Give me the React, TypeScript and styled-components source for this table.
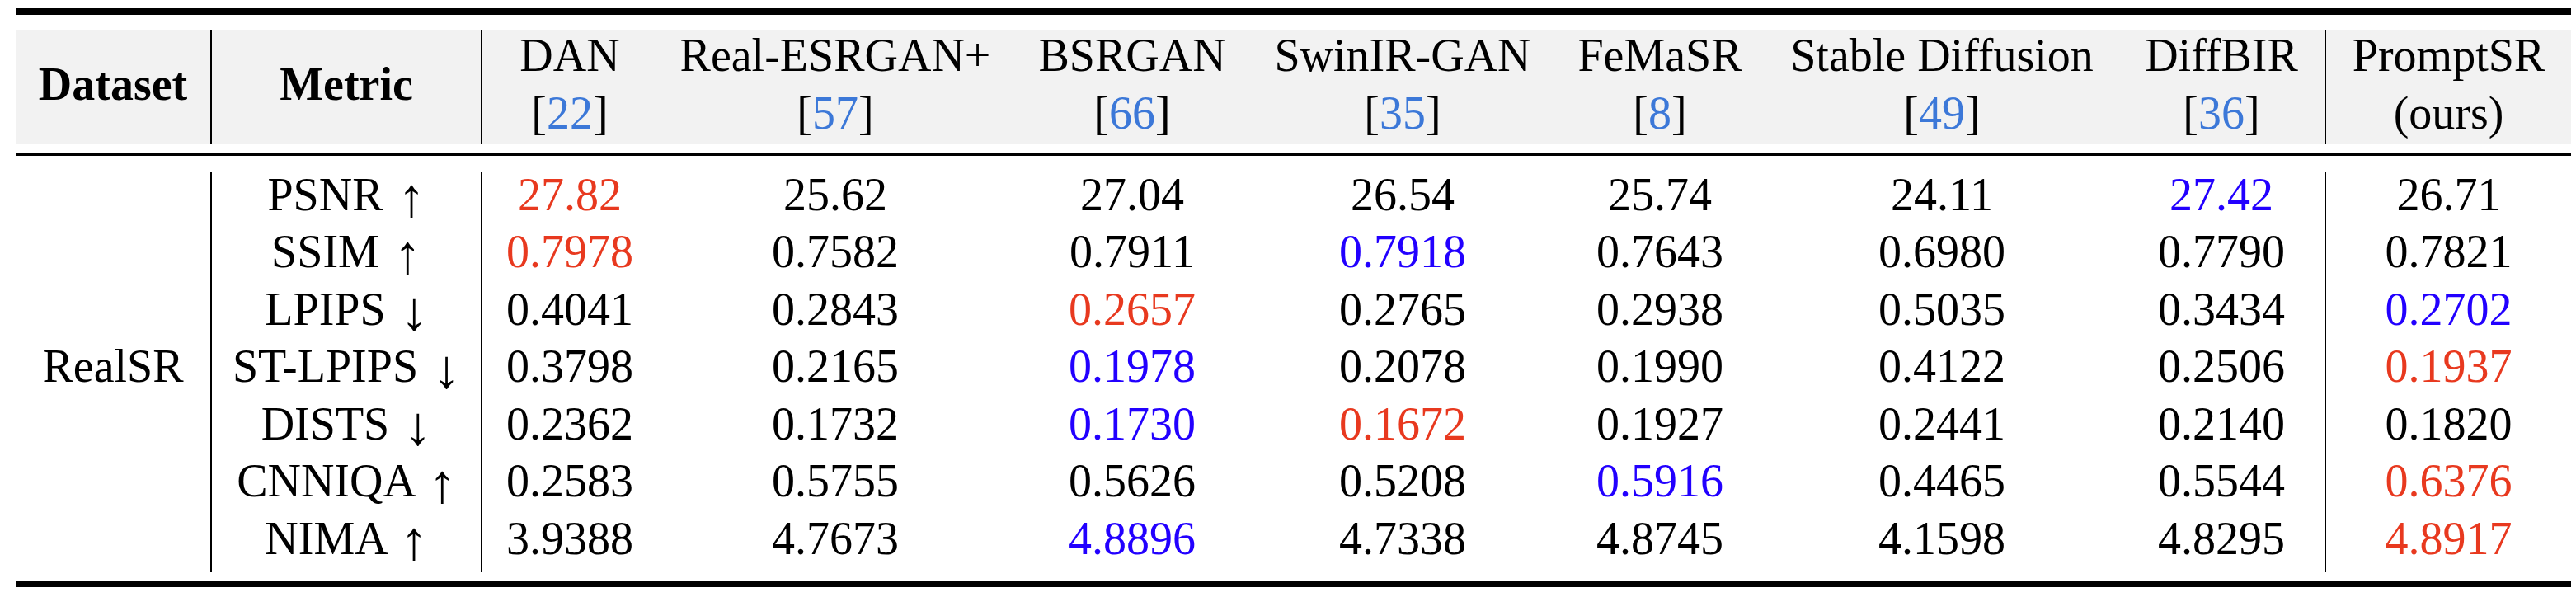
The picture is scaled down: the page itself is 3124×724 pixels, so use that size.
import React from "react";
import styled, { createGlobalStyle } from "styled-components";

const SERIF = `"Liberation Serif", "Times New Roman", serif`;

const GlobalStyle = createGlobalStyle`
  html, body {
    margin: 0;
    padding: 0;
    background: #ffffff;
  }
  body {
    font-family: ${SERIF};
    color: #000;
  }
`;

const COLS = "238px 328px 212px 432px 288px 368px 256px 428px 252px 297px";

const Page = styled.div`
  width: 3124px;
  height: 724px;
  box-sizing: border-box;
  padding: 10px 6px 0 19px;
  display: flex;
  flex-direction: column;
  font-family: ${SERIF};
`;

const Rule = styled.div<{ $h: number; $gap: number }>`
  width: 3099px;
  height: ${(p) => p.$h}px;
  margin-top: ${(p) => p.$gap}px;
  background: #000;
  flex: none;
`;

const HeaderRow = styled.div`
  margin-top: 18px;
  width: 3099px;
  height: 139px;
  display: grid;
  grid-template-columns: ${COLS};
  background: #f2f2f2;
  flex: none;
`;

const HeaderCell = styled.div<{ $divider?: boolean; $bold?: boolean }>`
  box-sizing: border-box;
  height: 139px;
  padding-bottom: 8px;
  display: flex;
  flex-direction: column;
  align-items: center;
  justify-content: center;
  font-family: ${SERIF};
  font-size: 56px;
  line-height: 70px;
  font-weight: ${(p) => (p.$bold ? 700 : 400)};
  white-space: nowrap;
  border-right: ${(p) => (p.$divider ? "2px solid #000" : "none")};
`;

const HeaderLine = styled.div`
  height: 70px;
`;

const Cite = styled.span`
  color: #3c78d8;
`;

const Body = styled.div`
  margin-top: 19px;
  width: 3099px;
  display: grid;
  grid-template-columns: ${COLS};
  grid-auto-rows: 69.43px;
  flex: none;
`;

const DatasetCell = styled.div`
  grid-column: 1;
  grid-row: 1 / span 7;
  box-sizing: border-box;
  border-right: 2px solid #000;
  display: flex;
  align-items: center;
  justify-content: center;
  padding-bottom: 14px;
  font-family: ${SERIF};
  font-size: 56px;
  line-height: 56px;
`;

const MetricCell = styled.div<{ $row: number }>`
  grid-column: 2;
  grid-row: ${(p) => p.$row};
  box-sizing: border-box;
  height: 69.43px;
  text-align: center;
  font-family: ${SERIF};
  font-size: 56px;
  line-height: 56px;
  white-space: nowrap;
  border-right: 2px solid #000;
`;

const Arrow = styled.span`
  display: inline-block;
  margin-left: 4px;
  font-size: 1.18em;
  line-height: 0;
  vertical-align: -0.1em;
`;

const Cell = styled.div<{ $divider?: boolean; $tone?: "plain" | "best" | "second"; $row: number }>`
  grid-row: ${(p) => p.$row};
  box-sizing: border-box;
  height: 69.43px;
  text-align: center;
  font-family: ${SERIF};
  font-size: 56px;
  line-height: 56px;
  white-space: nowrap;
  border-right: ${(p) => (p.$divider ? "2px solid #000" : "none")};
  color: ${(p) =>
    p.$tone === "best" ? "#e8391f" : p.$tone === "second" ? "#2200ff" : "#000"};
`;

type Tone = "plain" | "best" | "second";

const methods: { name: string; cite: string | null }[] = [
  { name: "DAN", cite: "22" },
  { name: "Real-ESRGAN+", cite: "57" },
  { name: "BSRGAN", cite: "66" },
  { name: "SwinIR-GAN", cite: "35" },
  { name: "FeMaSR", cite: "8" },
  { name: "Stable Diffusion", cite: "49" },
  { name: "DiffBIR", cite: "36" },
  { name: "PromptSR", cite: null },
];

const r = (v: string): [string, Tone] => [v, "best"];
const b = (v: string): [string, Tone] => [v, "second"];
const n = (v: string): [string, Tone] => [v, "plain"];

const rows: { metric: string; arrow: "↑" | "↓"; values: [string, Tone][] }[] = [
  {
    metric: "PSNR",
    arrow: "↑",
    values: [r("27.82"), n("25.62"), n("27.04"), n("26.54"), n("25.74"), n("24.11"), b("27.42"), n("26.71")],
  },
  {
    metric: "SSIM",
    arrow: "↑",
    values: [r("0.7978"), n("0.7582"), n("0.7911"), b("0.7918"), n("0.7643"), n("0.6980"), n("0.7790"), n("0.7821")],
  },
  {
    metric: "LPIPS",
    arrow: "↓",
    values: [n("0.4041"), n("0.2843"), r("0.2657"), n("0.2765"), n("0.2938"), n("0.5035"), n("0.3434"), b("0.2702")],
  },
  {
    metric: "ST-LPIPS",
    arrow: "↓",
    values: [n("0.3798"), n("0.2165"), b("0.1978"), n("0.2078"), n("0.1990"), n("0.4122"), n("0.2506"), r("0.1937")],
  },
  {
    metric: "DISTS",
    arrow: "↓",
    values: [n("0.2362"), n("0.1732"), b("0.1730"), r("0.1672"), n("0.1927"), n("0.2441"), n("0.2140"), n("0.1820")],
  },
  {
    metric: "CNNIQA",
    arrow: "↑",
    values: [n("0.2583"), n("0.5755"), n("0.5626"), n("0.5208"), b("0.5916"), n("0.4465"), n("0.5544"), r("0.6376")],
  },
  {
    metric: "NIMA",
    arrow: "↑",
    values: [n("3.9388"), n("4.7673"), b("4.8896"), n("4.7338"), n("4.8745"), n("4.1598"), n("4.8295"), r("4.8917")],
  },
];

export default function App() {
  return (
    <>
      <GlobalStyle />
      <Page>
        <Rule $h={8} $gap={0} />
        <HeaderRow>
          <HeaderCell $divider $bold>
            <HeaderLine>Dataset</HeaderLine>
          </HeaderCell>
          <HeaderCell $divider $bold>
            <HeaderLine>Metric</HeaderLine>
          </HeaderCell>
          {methods.map((m, i) => (
            <HeaderCell key={m.name} $divider={i === 6}>
              <HeaderLine>{m.name}</HeaderLine>
              <HeaderLine>
                {m.cite ? (
                  <>
                    [<Cite>{m.cite}</Cite>]
                  </>
                ) : (
                  "(ours)"
                )}
              </HeaderLine>
            </HeaderCell>
          ))}
        </HeaderRow>
        <Rule $h={4} $gap={10} />
        <Body>
          <DatasetCell>RealSR</DatasetCell>
          {rows.map((row, ri) => (
            <React.Fragment key={row.metric}>
              <MetricCell $row={ri + 1}>
                {row.metric} <Arrow>{row.arrow}</Arrow>
              </MetricCell>
              {row.values.map(([v, t], ci) => (
                <Cell key={ci} $row={ri + 1} $tone={t} $divider={ci === 6}>
                  {v}
                </Cell>
              ))}
            </React.Fragment>
          ))}
        </Body>
        <Rule $h={8} $gap={10} />
      </Page>
    </>
  );
}
